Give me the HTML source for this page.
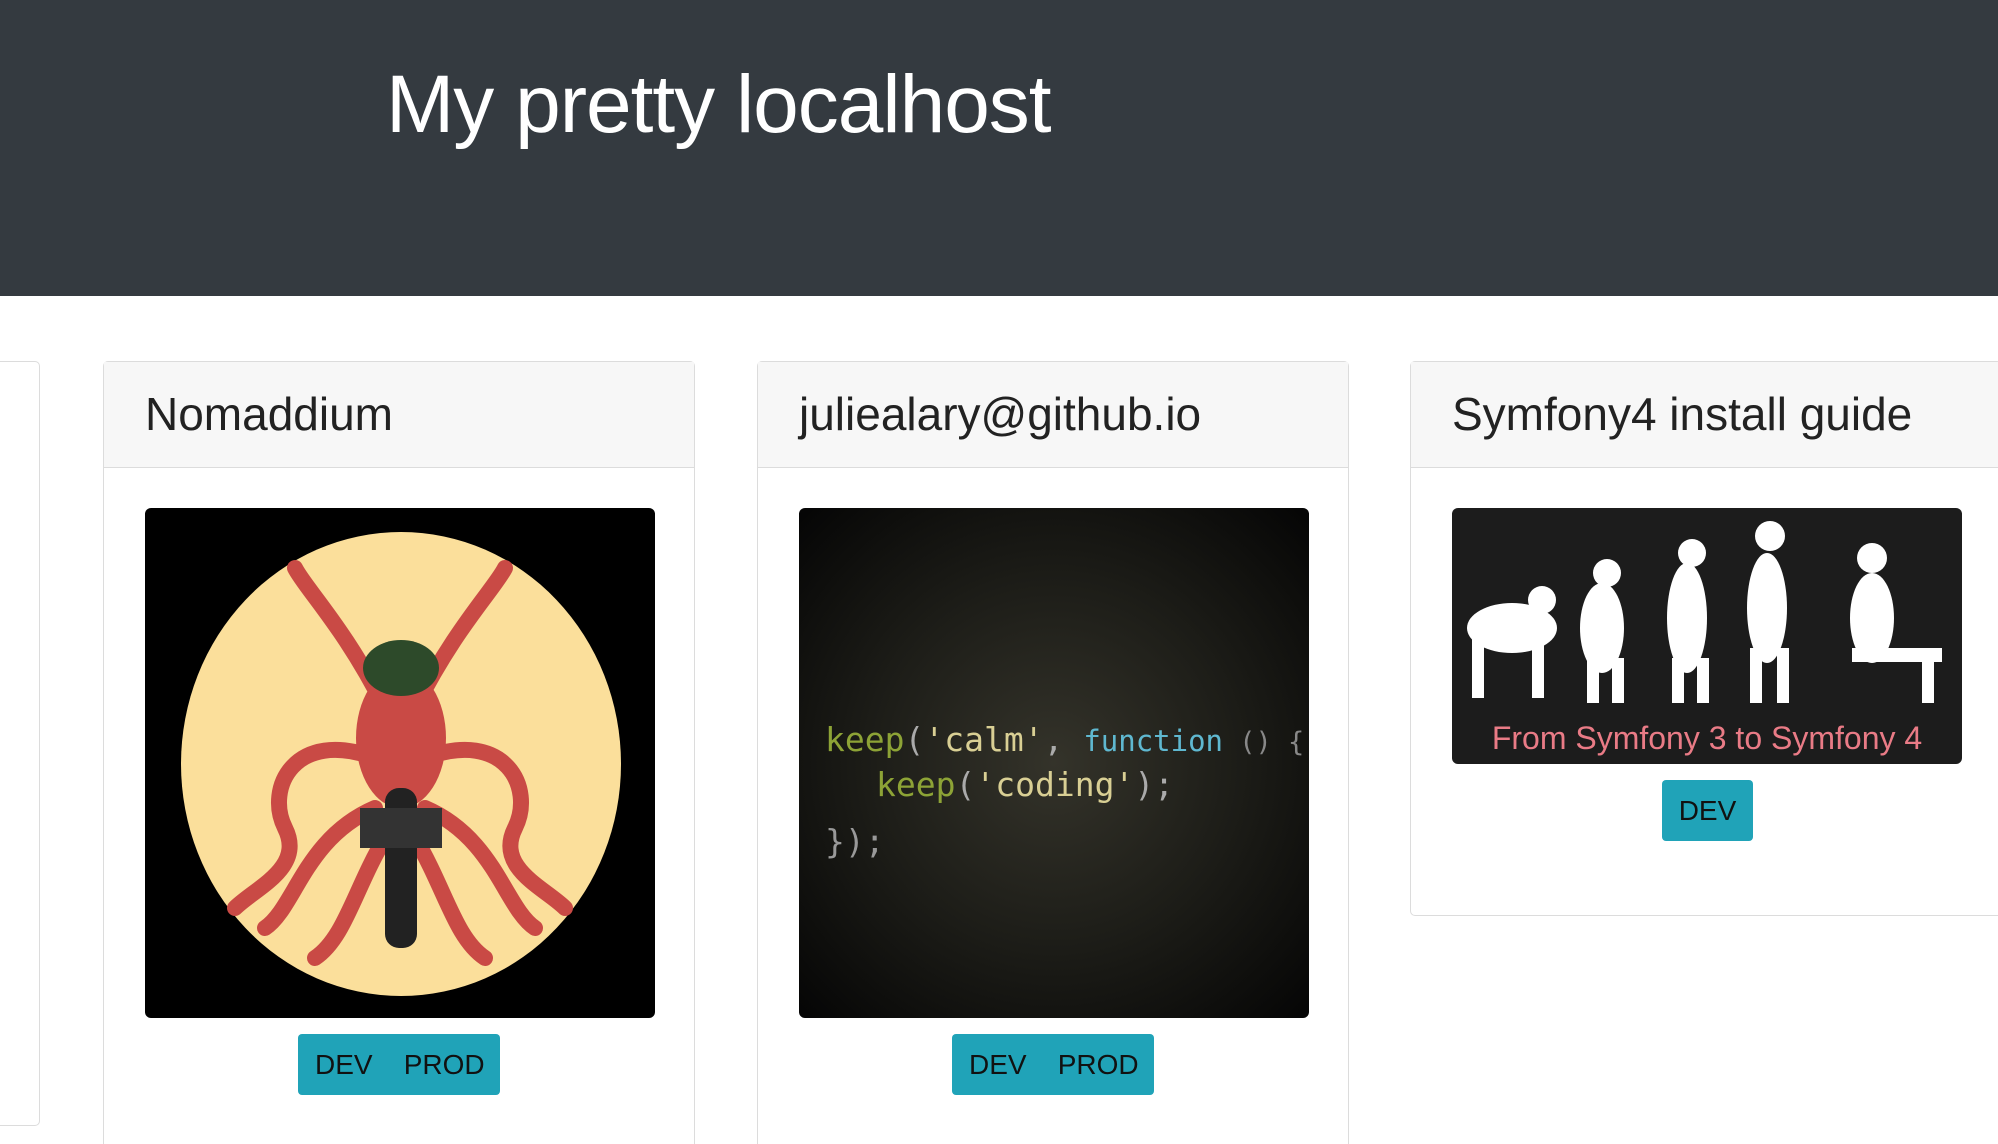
<!DOCTYPE html>
<html style="height:1144px;overflow:hidden"><head><meta charset="utf-8"><style>
*{box-sizing:border-box;margin:0;padding:0}
body{width:1998px;height:1144px;overflow:hidden;background:#fff;font-family:"Liberation Sans",sans-serif}
#w{position:relative;width:1998px;height:1144px;overflow:hidden}
.hdr{position:absolute;left:0;top:0;width:1998px;height:296px;background:#343a40}
.hdr h1{position:absolute;left:386px;top:58px;color:#fff;font-weight:500;font-size:82px;letter-spacing:-1px}
.card{position:absolute;top:361px;width:592px;border:1.5px solid #dcdcdc;border-radius:5px;background:#fff}
.tall{height:783px;border-bottom:none;border-radius:5px 5px 0 0}
.ch{height:106px;background:#f7f7f7;border-bottom:1.5px solid #dcdcdc;padding-left:41px;font-size:46px;line-height:104px;color:#222;white-space:nowrap;overflow:hidden}
.img{position:absolute;left:41px;top:146px;width:510px;border-radius:6px;overflow:hidden}
.btn{position:absolute;background:#20a3b8;border-radius:4px;height:61px;font-size:28px;color:#111;line-height:61px}
</style></head><body><div id="w">
<div class="hdr"><h1>My pretty localhost</h1></div>

<div class="card" style="left:-552px;height:765px"></div>

<div class="card tall" style="left:103px">
 <div class="ch">Nomaddium</div>
 <div class="img" style="height:510px;background:#000">
  <svg width="510" height="510" viewBox="0 0 510 510">
   <ellipse cx="256" cy="256" rx="220" ry="232" fill="#fbdf9b"/>
   <g fill="none" stroke="#c94a45" stroke-width="16" stroke-linecap="round">
    <path d="M240 200 C200 120 160 80 150 60"/>
    <path d="M270 200 C310 120 350 80 360 60"/>
    <path d="M230 250 C150 220 120 280 140 320 C160 360 110 380 90 400"/>
    <path d="M280 250 C360 220 390 280 370 320 C350 360 400 380 420 400"/>
    <path d="M230 300 C160 330 150 400 120 420"/>
    <path d="M280 300 C350 330 360 400 390 420"/>
    <path d="M240 330 C210 380 200 430 170 450"/>
    <path d="M270 330 C300 380 310 430 340 450"/>
   </g>
   <ellipse cx="256" cy="230" rx="45" ry="70" fill="#c94a45"/>
   <ellipse cx="256" cy="160" rx="38" ry="28" fill="#2d4a2a"/>
   <rect x="240" y="280" width="32" height="160" rx="14" fill="#222"/>
   <rect x="215" y="300" width="82" height="40" fill="#333"/>
  </svg>
 </div>
 <div class="btn" style="left:194px;top:672px;width:202px;padding-left:17px">DEV&nbsp;&nbsp;&nbsp;&nbsp;PROD</div>
</div>

<div class="card tall" style="left:757px">
 <div class="ch">juliealary@github.io</div>
 <div class="img" style="height:510px;background:radial-gradient(ellipse at 50% 50%,#34332a 0%,#1d1d18 50%,#050505 100%)">
  <svg width="510" height="510" viewBox="0 0 510 510" font-family="'DejaVu Sans Mono','Liberation Mono',monospace" font-size="33">
   <text x="26" y="243"><tspan fill="#8da336">keep</tspan><tspan fill="#aaa">(</tspan><tspan fill="#d9cf94">'calm'</tspan><tspan fill="#aaa">, </tspan><tspan fill="#5fb8d0" font-size="29">function</tspan><tspan fill="#888" font-size="27"> () {</tspan></text>
   <text x="77" y="288"><tspan fill="#8da336">keep</tspan><tspan fill="#aaa">(</tspan><tspan fill="#d9cf94">'coding'</tspan><tspan fill="#aaa">);</tspan></text>
   <text x="26" y="345" fill="#999">});</text>
  </svg>
 </div>
 <div class="btn" style="left:194px;top:672px;width:202px;padding-left:17px">DEV&nbsp;&nbsp;&nbsp;&nbsp;PROD</div>
</div>

<div class="card" style="left:1410px;height:555px">
 <div class="ch">Symfony4 install guide</div>
 <div class="img" style="height:256px;background:#1c1c1c">
  <svg width="510" height="256" viewBox="0 0 510 256">
   <g fill="#fff">
    <ellipse cx="60" cy="120" rx="45" ry="25"/><circle cx="90" cy="92" r="14"/><rect x="20" y="130" width="12" height="60"/><rect x="80" y="130" width="12" height="60"/>
    <ellipse cx="150" cy="120" rx="22" ry="45"/><circle cx="155" cy="65" r="14"/><rect x="135" y="150" width="12" height="45"/><rect x="160" y="150" width="12" height="45"/>
    <ellipse cx="235" cy="110" rx="20" ry="55"/><circle cx="240" cy="45" r="14"/><rect x="220" y="150" width="12" height="45"/><rect x="245" y="150" width="12" height="45"/>
    <ellipse cx="315" cy="100" rx="20" ry="55"/><circle cx="318" cy="28" r="15"/><rect x="298" y="140" width="12" height="55"/><rect x="325" y="140" width="12" height="55"/>
    <ellipse cx="420" cy="110" rx="22" ry="45"/><circle cx="420" cy="50" r="15"/><rect x="400" y="140" width="90" height="14"/><rect x="470" y="150" width="12" height="45"/>
   </g>
   <text x="255" y="241" text-anchor="middle" font-family="'Liberation Sans',sans-serif" font-size="32" fill="#e97b86">From Symfony 3 to Symfony 4</text>
  </svg>
 </div>
 <div class="btn" style="left:251px;top:418px;width:91px;text-align:center">DEV</div>
</div>
</div></body></html>
